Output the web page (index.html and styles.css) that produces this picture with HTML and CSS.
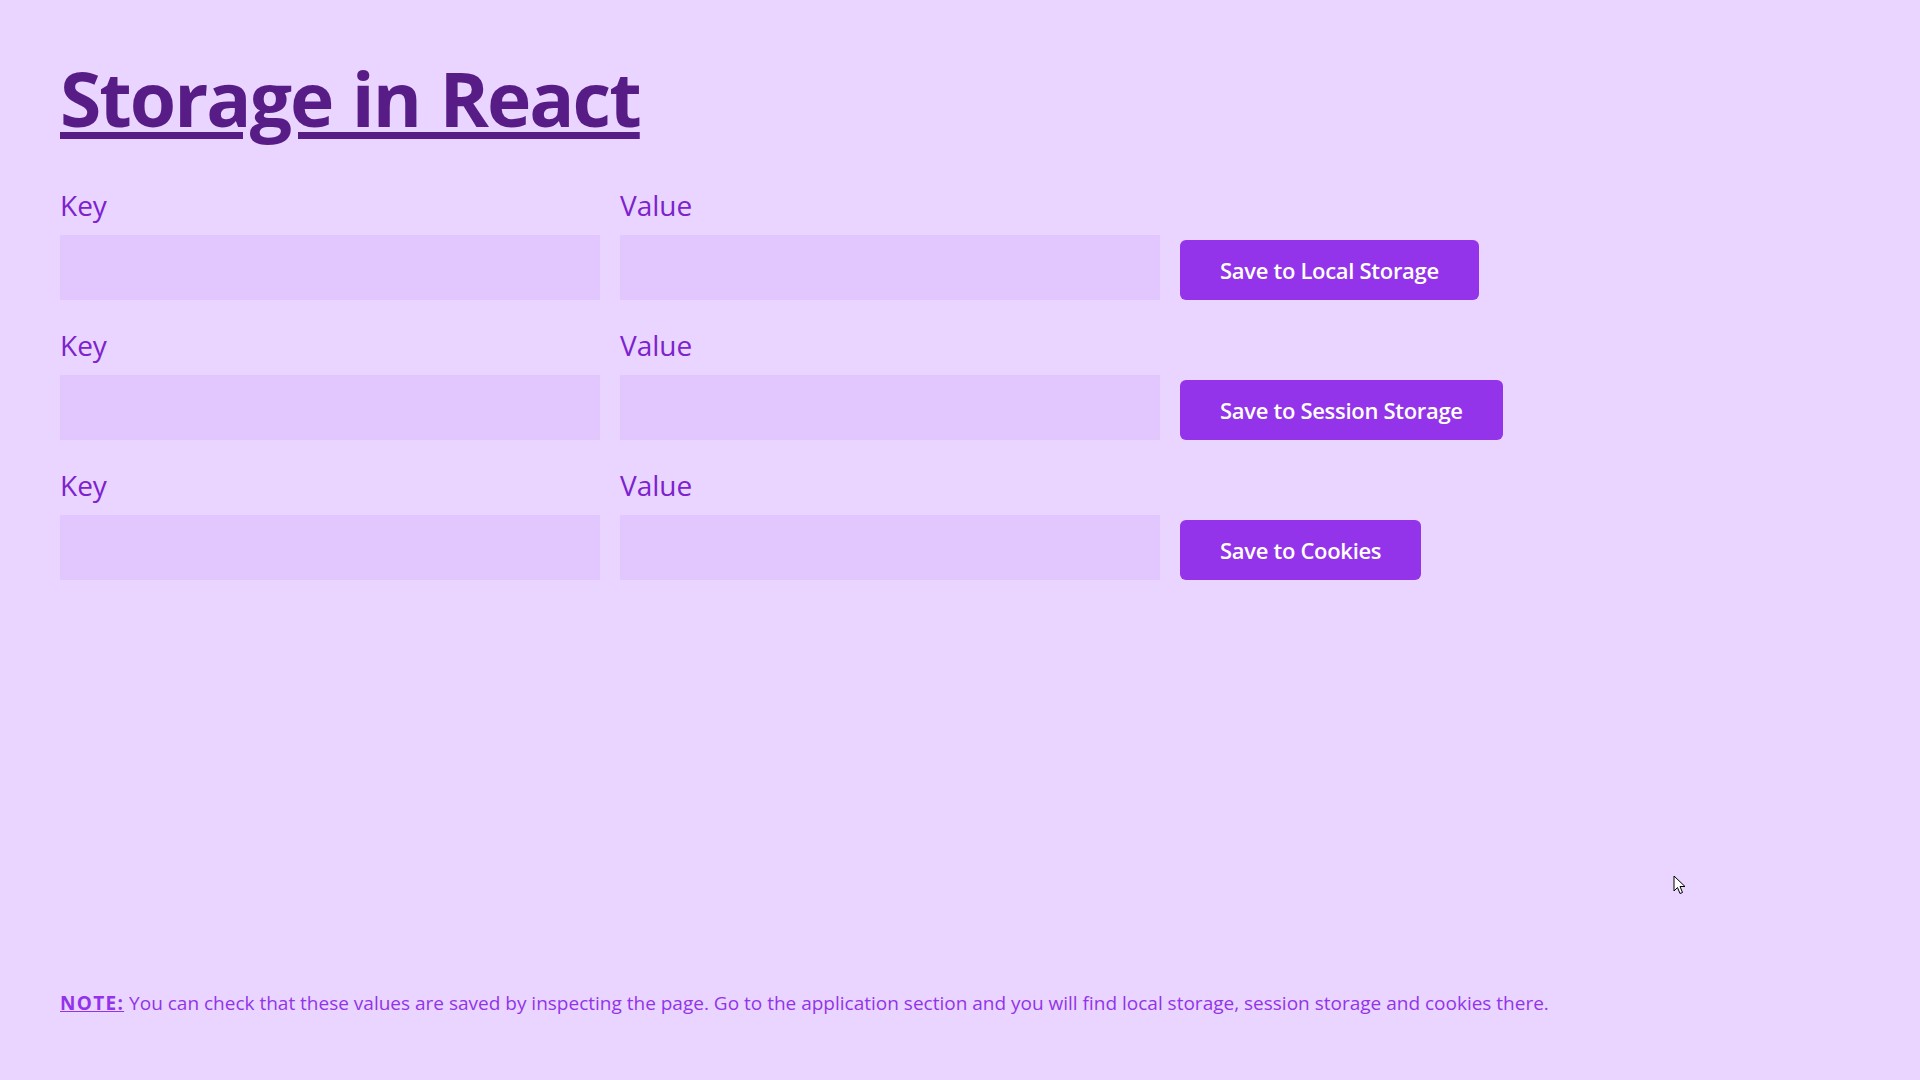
FILE: index.html
```html
<!DOCTYPE html>
<html lang="en">
<head>
<meta charset="utf-8">
<title>Storage in React</title>
<link rel="stylesheet" href="styles.css">
</head>
<body>
<div class="page">
  <h1 class="title">Storage in React</h1>
  <div class="forms">
    <div class="row">
      <div class="field">
        <label class="label">Key</label>
        <input class="input" type="text">
      </div>
      <div class="field">
        <label class="label">Value</label>
        <input class="input" type="text">
      </div>
      <button class="btn">Save to Local Storage</button>
    </div>
    <div class="row">
      <div class="field">
        <label class="label">Key</label>
        <input class="input" type="text">
      </div>
      <div class="field">
        <label class="label">Value</label>
        <input class="input" type="text">
      </div>
      <button class="btn">Save to Session Storage</button>
    </div>
    <div class="row">
      <div class="field">
        <label class="label">Key</label>
        <input class="input" type="text">
      </div>
      <div class="field">
        <label class="label">Value</label>
        <input class="input" type="text">
      </div>
      <button class="btn">Save to Cookies</button>
    </div>
  </div>
  <p class="note"><span class="note-tag">NOTE:</span> You can check that these values are saved by inspecting the page. Go to the application section and you will find local storage, session storage and cookies there.</p>
</div>
<svg class="cursor" width="13" height="20" viewBox="0 0 13 20"><path d="M1 1 L1 16 L4.5 12.5 L7 18.5 L9.5 17.5 L7 11.5 L12 11.5 Z" fill="#fff" stroke="#000" stroke-width="1" stroke-linejoin="round"/></svg>
</body>
</html>
```
FILE: styles.css
```css
html, body {
  margin: 0;
  padding: 0;
  background: #e9d5ff;
}
body {
  font-family: "Open Sans", "Noto Sans", sans-serif;
}
.page {
  box-sizing: border-box;
  height: 100vh;
  padding: 58px 60px 63px 60px;
  display: flex;
  flex-direction: column;
}
.title {
  margin: 0;
  font-size: 75px;
  line-height: 80px;
  font-weight: 700;
  color: #581c87;
  text-decoration: underline;
  text-decoration-thickness: 7px;
  text-underline-offset: 5px;
  letter-spacing: -2px;
  word-spacing: 2px;
  align-self: flex-start;
}
.forms {
  margin-top: 49px;
  display: flex;
  flex-direction: column;
  gap: 27px;
}
.row {
  display: flex;
  align-items: flex-end;
  gap: 20px;
}
.field {
  display: flex;
  flex-direction: column;
  width: 540px;
}
.label {
  font-size: 28px;
  line-height: 36px;
  color: #7e22ce;
  margin-bottom: 12px;
}
.input {
  box-sizing: border-box;
  height: 65px;
  width: 540px;
  border: none;
  outline: none;
  background: #e1c7fe;
  font-family: inherit;
  font-size: 24px;
  padding: 0 16px;
  margin: 0;
}
.btn {
  height: 60px;
  padding: 0 40px;
  border: none;
  border-radius: 6px;
  background: #9333ea;
  color: #fff;
  font-family: inherit;
  font-size: 22px;
  font-weight: 600;
  letter-spacing: -0.3px;
  cursor: pointer;
}
.note {
  margin: auto 0 0 0;
  font-size: 19px;
  line-height: 28px;
  color: #9333ea;
}
.note-tag {
  font-weight: 700;
  letter-spacing: 1.3px;
  text-decoration: underline;
}
.cursor {
  position: absolute;
  left: 1673px;
  top: 875px;
}
```
